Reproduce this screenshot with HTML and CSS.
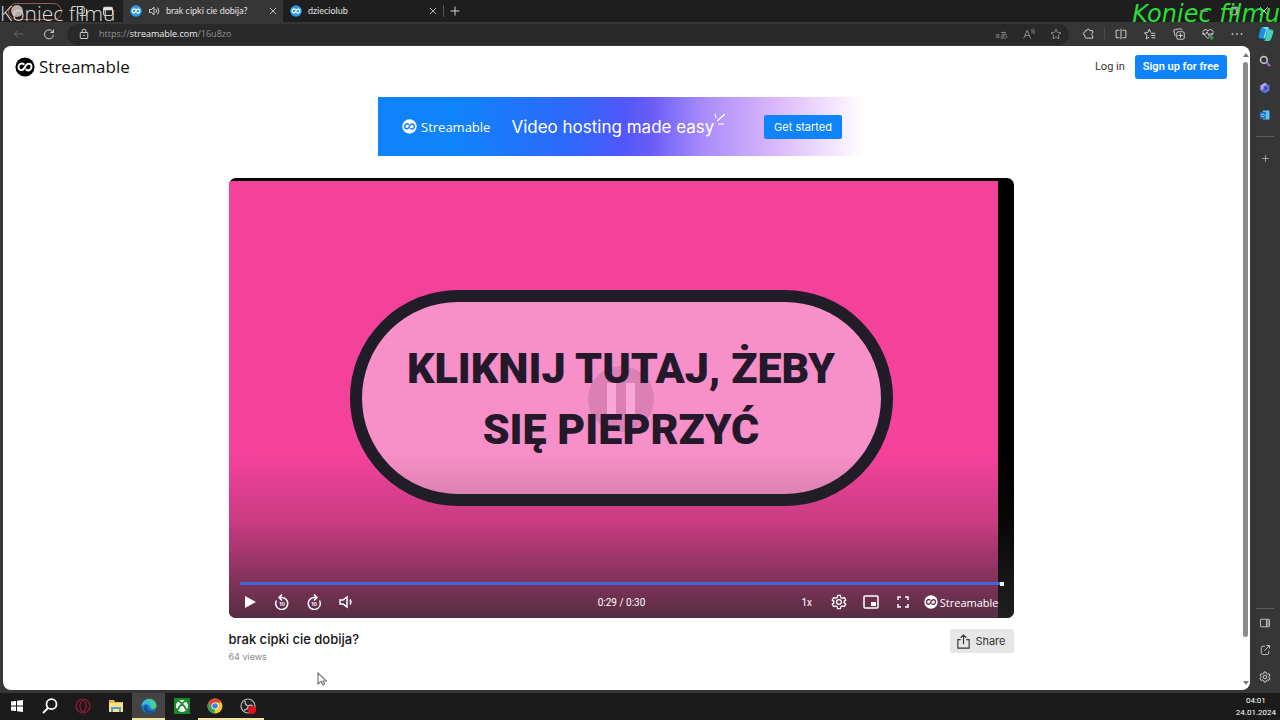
FILE: index.html
```html
<!DOCTYPE html>
<html lang="pl">

<head>
    <meta charset="utf-8">
    <title>brak cipki cie dobija?</title>
    <meta name="viewport" content="width=device-width,initial-scale=1" />
    <link rel="stylesheet" href="styles.css">
</head>

<body>
    <svg class="defs" aria-hidden="true">
        <symbol id="logo" viewBox="0 0 24 24">
            <circle class="logo-disc" cx="12" cy="12" r="11.5" />
            <path class="logo-line" d="M10.500 8.600C7.500 6.400 4 9 4.200 12.600c.300 3.600 4.600 4.200 6.500 1.300l2.600-4c1.900-2.900 6.200-2.300 6.500 1.300.200 3.600-3.300 6.200-6.300 4" />
        </symbol>
        <symbol id="close" viewBox="0 0 16 16">
            <path d="M3 3l10 10M13 3L3 13" />
        </symbol>
        <symbol id="plus" viewBox="0 0 16 16">
            <path d="M8 2v12M2 8h12" />
        </symbol>
        <symbol id="gear" viewBox="0 0 24 24">
            <circle cx="12" cy="12" r="3.6" />
            <path d="M10 2h4l.7 3.2 2.3 1.3 3.1-1 2 3.5-2.4 2.1v2.1l2.4 2.1-2 3.5-3.1-1-2.3 1.3L14 22h-4l-.7-2.9L7 17.800l-3.100 1-2-3.500 2.400-2.100v-2.100L1.900 9l2-3.500 3.100 1 2.300-1.300z" />
        </symbol>
    </svg>

    <div class="titlebar">
        <div class="titlebar-left">
            <button class="profile" aria-label="Profile"><span class="avatar"></span></button>
            <button class="icon-btn" aria-label="Workspaces">
                <svg viewBox="0 0 16 16"><rect x="2" y="2" width="9" height="9" rx="2" /><path d="M5 14h7a2 2 0 0 0 2-2V5M5 6h3" /></svg>
            </button>
            <button class="icon-btn" aria-label="Tab actions">
                <svg viewBox="0 0 16 16"><rect x="2" y="3" width="12" height="11" rx="2" /><path class="solid" d="M2 3h12v4H2z" /></svg>
            </button>
            <span class="caption caption-left">Koniec filmu</span>
        </div>
        <div class="tab tab-active">
            <svg class="favicon"><use href="#logo" /></svg>
            <svg class="sound" viewBox="0 0 16 16"><path d="M2 6h2.500L8 3v10L4.500 10H2zM10.500 5.500q1.700 2.500 0 5M13 3.500q3 4.500 0 9" /></svg>
            <span class="tab-title">brak cipki cie dobija?</span>
            <button class="tab-close" aria-label="Close tab"><svg><use href="#close" /></svg></button>
        </div>
        <div class="tab">
            <svg class="favicon"><use href="#logo" /></svg>
            <span class="tab-title">dzieciolub</span>
            <button class="tab-close" aria-label="Close tab"><svg><use href="#close" /></svg></button>
        </div>
        <button class="new-tab" aria-label="New tab"><svg><use href="#plus" /></svg></button>
        <div class="window-buttons">
            <button aria-label="Minimize"><svg viewBox="0 0 16 16"><path d="M3 8h10" /></svg></button>
            <button aria-label="Restore"><svg viewBox="0 0 16 16"><path d="M3 5h8v8H3zM5 5V3h8v8h-2" /></svg></button>
            <button aria-label="Close"><svg><use href="#close" /></svg></button>
            <span class="caption caption-right">Koniec filmu</span>
        </div>
    </div>

    <div class="toolbar">
        <button class="tool back" aria-label="Back"><svg viewBox="0 0 16 16"><path d="M14 8H2M7 3L2 8l5 5" /></svg></button>
        <button class="tool" aria-label="Refresh"><svg viewBox="0 0 16 16"><path d="M13.500 6A6 6 0 1 0 14 9M14 2v4h-4" /></svg></button>
        <div class="address">
            <svg viewBox="0 0 16 16"><rect x="3" y="6" width="10" height="8" rx="1" /><path d="M5.500 6V4a2.500 2.500 0 0 1 5 0v2" /><circle class="solid" cx="8" cy="10" r="1" /></svg>
            <span class="url">https://<b>streamable.com</b>/16u8zo</span>
            <button class="tool dim translate" aria-label="Translate">aあ</button>
            <button class="tool dim" aria-label="Read aloud"><svg viewBox="0 0 16 16"><path d="M1 14L5.500 3 10 14M2.500 10h6M11 2q2 2 1 5M13 1q3 3 1.500 7" /></svg></button>
            <button class="tool dim" aria-label="Add to favorites"><svg viewBox="0 0 16 16"><path d="M8 1.500l2 4.300 4.700.6-3.500 3.200.9 4.700L8 12l-4.100 2.300.9-4.700L1.300 6.400 6 5.800z" /></svg></button>
        </div>
        <div class="tools">
            <button class="tool" aria-label="Extensions"><svg viewBox="0 0 16 16"><path d="M5 3.500a2 2 0 0 1 4 0h4v3a2.200 2.200 0 0 0 0 4v3H4.500a2 2 0 0 1-2-2v-2a2 2 0 0 1 0-4 2 2 0 0 1 2.500-2z" /></svg></button>
            <span class="tool-divider"></span>
            <button class="tool" aria-label="Split screen"><svg viewBox="0 0 16 16"><path d="M6 3H1.500v10H6M10 3h4.500v10H10M8 1v14" /></svg></button>
            <button class="tool" aria-label="Favorites"><svg viewBox="0 0 16 16"><path d="M9 6L7 1.500 5 6l-4.500.6L4 9.700 3 14.500l4-2.300M9.500 7H15M9.500 10H15M10 13h5" /></svg></button>
            <button class="tool" aria-label="Collections"><svg viewBox="0 0 16 16"><rect x="5" y="5" width="10" height="10" rx="2" /><path d="M10 7v6M7 10h6M3 11L1 4q0-2 2-2l7-1q2 0 2 2" /></svg></button>
            <button class="tool" aria-label="Browser essentials"><svg viewBox="0 0 16 16"><path d="M8 14L2 8C-1 3 5 0 8 4c3-4 9-1 6 4zM0 8h5l2-3 2 5 1-2h5" /><circle class="green" cx="13" cy="13" r="2.500" /></svg></button>
            <button class="tool" aria-label="Settings and more"><svg viewBox="0 0 16 16"><path class="solid" d="M1 7h2v2H1zM7 7h2v2H7zM13 7h2v2h-2z" /></svg></button>
            <button class="tool copilot" aria-label="Copilot">
                <svg viewBox="0 0 18 18">
                    <path fill="#1b8fe6" d="M5 1h6l-3 13H3q-3 0-2-4l2-7q1-2 2-2z" />
                    <path fill="#42d3b5" d="M10 4h5q3 0 2 4l-2 6q-1 3-4 3H6q2 0 3-5z" />
                    <path fill="#7be4f2" d="M5 1h6q1 0 2 3h-3L8 14H6L9 4z" />
                </svg>
            </button>
        </div>
    </div>

    <div class="middle">
        <div class="viewport">
            <div class="page">
                <header class="site-header">
                    <a class="brand" href="#"><svg><use href="#logo" /></svg>Streamable</a>
                    <nav>
                        <a class="login" href="#">Log in</a>
                        <a class="signup" href="#">Sign up for free</a>
                    </nav>
                </header>

                <a class="banner" href="#">
                    <span class="banner-brand"><svg><use href="#logo" /></svg>Streamable</span>
                    <span class="banner-text">Video hosting made easy</span>
                    <svg class="sparks" viewBox="0 0 12 14"><path d="M1 2l1 4M3 9l8-7M4 12h6" /></svg>
                    <span class="banner-cta">Get started</span>
                </a>

                <main class="video">
                    <div class="player">
                        <div class="frame"></div>
                        <button class="promo">
                            <span class="pause"></span>
                            <span class="promo-text">KLIKNIJ TUTAJ, ŻEBY<br>SIĘ PIEPRZYĆ</span>
                        </button>
                        <div class="shade"></div>
                        <div class="controls">
                            <input class="seek" type="range" min="0" max="300" value="300" aria-label="Seek">
                            <div class="control-row">
                                <div class="group">
                                    <button aria-label="Play"><svg viewBox="0 0 16 16"><path class="solid" d="M3 2l11 6-11 6z" /></svg></button>
                                    <button aria-label="Back 10 seconds"><svg viewBox="0 0 16 16"><path d="M2.500 6.500A6 6 0 1 0 8 3.500H5M8 .500l-3 3 3 3" /><text x="8" y="12">10</text></svg></button>
                                    <button aria-label="Forward 10 seconds"><svg viewBox="0 0 16 16"><path d="M13.500 6.500A6 6 0 1 1 8 3.500h3M8 .500l3 3-3 3" /><text x="8" y="12">10</text></svg></button>
                                    <button aria-label="Volume"><svg viewBox="0 0 16 16"><path d="M2 6h3l4-3v10l-4-3H2zM12 5.500q1.700 2.500 0 5" /></svg></button>
                                </div>
                                <span class="time">0:29 / 0:30</span>
                                <div class="group group-right">
                                    <button aria-label="Playback speed">1x</button>
                                    <button aria-label="Settings"><svg class="thick"><use href="#gear" /></svg></button>
                                    <button aria-label="Picture in picture"><svg viewBox="0 0 16 16"><rect x="1" y="2" width="14" height="12" rx="1" /><path class="solid" d="M8 8h5v4H8z" /></svg></button>
                                    <button aria-label="Full screen"><svg viewBox="0 0 16 16"><path d="M3 6V3h3M10 3h3v3M13 10v3h-3M6 13H3v-3" /></svg></button>
                                    <a class="player-brand" href="#"><svg><use href="#logo" /></svg>Streamable</a>
                                </div>
                            </div>
                        </div>
                    </div>
                    <div class="details">
                        <div>
                            <h1>brak cipki cie dobija?</h1>
                            <p class="views">64 views</p>
                        </div>
                        <button class="share">
                            <svg viewBox="0 0 16 16"><path d="M5 6H2v9h12V6h-3M8 11V1M5 4l3-3 3 3" /></svg>
                            Share
                        </button>
                    </div>
                </main>

                <svg class="cursor" viewBox="0 0 10 14"><path d="M1 1v11l3-2.500L6 13l1.500-1-1.500-3h3.500z" /></svg>
            </div>
            <div class="scrollbar">
                <span class="arrow arrow-up"></span>
                <span class="thumb"></span>
                <span class="arrow arrow-down"></span>
            </div>
        </div>

        <aside class="sidebar">
            <button aria-label="Search"><svg viewBox="0 0 16 16"><circle cx="6.500" cy="6.500" r="4.500" stroke-width="2" /><path stroke="#a56bd0" stroke-width="2.500" d="M10 10l5 5" /></svg></button>
            <button aria-label="Microsoft 365"><svg viewBox="0 0 16 16"><path class="plain" fill="#5b6fe0" d="M8 1l6 3.500v7L8 15l-6-3.500v-7z" /><path class="plain" fill="#b9a0f0" d="M8 1L2 4.500V11l4-2V6l5-3z" /><path class="plain" fill="#2b3b8c" d="M7 6l4 2-3 3z" /></svg></button>
            <button aria-label="Outlook"><svg viewBox="0 0 16 16"><path class="plain" fill="#5cc2f2" d="M5 2h9v12H5z" /><path class="plain" fill="#0f6fc0" d="M1 4h8v9H1z" /><circle cx="5" cy="8.500" r="2" /></svg></button>
            <hr>
            <button aria-label="Add"><svg class="small"><use href="#plus" /></svg></button>
            <hr class="push">
            <button aria-label="Toggle sidebar"><svg viewBox="0 0 16 16"><rect x="2" y="3" width="12" height="10" rx="1" /><path d="M10 3v10M12 4v8" /></svg></button>
            <button aria-label="Open externally"><svg viewBox="0 0 16 16"><path d="M8 3H5a2 2 0 0 0-2 2v7a2 2 0 0 0 2 2h6a2 2 0 0 0 2-2V9M7 9l7-7M10 2h4v4" /></svg></button>
            <button aria-label="Sidebar settings"><svg class="thick"><use href="#gear" /></svg></button>
        </aside>
    </div>

    <div class="taskbar">
        <button aria-label="Start"><svg viewBox="0 0 16 16"><path fill="#fff" d="M2 3.500L7 3v4.500H2zM8 2.800L14 2v5.500H8zM2 8.500h5V13l-5-.6zM8 8.500h6V14l-6-.8z" /></svg></button>
        <button aria-label="Search"><svg viewBox="0 0 16 16"><path fill="none" stroke="#fff" stroke-width="1.800" d="M6 10l-5 5M14.500 6.200a5 5 0 1 1-10 0 5 5 0 0 1 10 0z" /></svg></button>
        <button aria-label="Opera GX"><svg viewBox="0 0 16 16"><g fill="none" stroke="#a01538" stroke-width="1.200"><circle cx="8" cy="8" r="7" /><ellipse cx="8" cy="8" rx="3" ry="5.500" /></g></svg></button>
        <button aria-label="File Explorer"><svg viewBox="0 0 16 16"><path fill="#e9b93c" d="M1 2h5l1 2h8v10H1z" /><path fill="#ffe08a" d="M1 5h14v9H1z" /><path fill="#4d9fc4" d="M3 9h10v5h-2v-3H5v3H3z" /></svg></button>
        <button class="running current" aria-label="Microsoft Edge"><svg viewBox="0 0 16 16"><circle cx="8" cy="8" r="7.500" fill="#1c78c8" /><path fill="#4bd08b" d="M1 6C4-1 15-1 15.500 8c0 3-4 3.500-6 2.500 2-3-1-5-4-5Q3 5.500.500 8z" /><path fill="#35b9df" d="M1 6c2-4 8-4 9-1 1 2 0 4-1 5 0-4-5-5-8.500-2z" /><path fill="#145096" d="M6 7c-1 4 2 7 7 6-3 3-9 3-10-2 0-2 1-4 3-4z" /></svg></button>
        <button aria-label="Xbox"><svg viewBox="0 0 16 16"><path fill="#178a2c" d="M0 0h16v16H0z" /><circle cx="8" cy="8" r="6" fill="#fff" /><path fill="none" stroke="#178a2c" stroke-width="1.800" d="M3 13Q5 8 8 6q3 2 5 7M4 3q3 1 4 3 1-2 4-3" /></svg></button>
        <button class="running" aria-label="Google Chrome"><svg viewBox="0 0 16 16"><circle cx="8" cy="8" r="7.500" fill="#f5c52f" /><path fill="#df4437" d="M1.500 4.300A7.500 7.500 0 0 1 14.500 4.500H8L5 9.500z" /><path fill="#2e9e52" d="M1.500 4.300L5 9.800l3 1.700-.800 4A7.500 7.500 0 0 1 1.500 4.300z" /><circle cx="8" cy="8" r="3.600" fill="#fff" /><circle cx="8" cy="8" r="2.800" fill="#3f7fe8" /></svg></button>
        <button class="running" aria-label="OBS Studio"><svg viewBox="0 0 16 16"><circle cx="8" cy="8" r="7" fill="#222" stroke="#bbb" /><path fill="none" stroke="#bbb" stroke-width="1.300" d="M5 3q0 4 3 5M8 8q4-2 5 1M8 8q0 4-4 4" /><circle cx="12" cy="12" r="4" fill="#e3101c" /></svg></button>
        <time class="clock">04:01<br>24.01.2024</time>
    </div>
</body>

</html>
```
FILE: styles.css
```css
* {
    box-sizing: border-box;
}

body {
    margin: 0;
    min-height: 100vh;
    display: flex;
    flex-direction: column;
    overflow: hidden;
    background: #363636;
    font-family: Inter, "Open Sans", sans-serif;
    color: #111;
}

button {
    display: flex;
    align-items: center;
    justify-content: center;
    flex: none;
    padding: 0;
    border: 0;
    background: none;
    color: inherit;
    font: inherit;
}

a {
    color: inherit;
    text-decoration: none;
}

svg {
    display: block;
    flex: none;
    width: 12px;
    height: 12px;
    fill: none;
    stroke: currentColor;
    stroke-width: 1.2;
}

.defs {
    position: absolute;
    width: 0;
    height: 0;
}

.solid {
    fill: currentColor;
    stroke: none;
}

.plain {
    stroke: none;
}

.logo-disc {
    fill: var(--disc);
    stroke: none;
}

.logo-line {
    fill: none;
    stroke: var(--line);
    stroke-width: 2.4;
    stroke-linecap: round;
}

/* tabs */
.titlebar {
    display: flex;
    height: 22px;
    background: #1e1e1e;
    color: #e4e4e4;
    font: 9px/22px Lato, sans-serif;
}

.titlebar-left {
    position: relative;
    display: flex;
    align-items: center;
    gap: 14px;
    width: 123px;
    padding-left: 8px;
}

.profile {
    justify-content: flex-start;
    width: 54px;
    height: 17px;
    padding: 2px;
    border: 1px solid #9a5a4e;
    border-radius: 9px;
}

.avatar {
    width: 12px;
    height: 12px;
    border-radius: 50%;
    background: #b9aaa6;
}

.caption {
    position: absolute;
    top: 0;
    white-space: nowrap;
}

.caption-left {
    left: 0;
    font: 300 21px/26px "Open Sans", sans-serif;
    color: #ddd;
}

.caption-right {
    right: 0;
    font: italic 24px/28px "DejaVu Sans", sans-serif;
    color: #2bdc38;
}

.tab {
    display: flex;
    align-items: center;
    gap: 6px;
    width: 160px;
    padding: 0 5px 0 7px;
}

.tab-active {
    background: #363636;
}

.favicon {
    --disc: #2f9be0;
    --line: #fff;
}

.tab-title {
    flex: 1;
    white-space: nowrap;
}

.tab-close svg {
    width: 10px;
    height: 10px;
}

.new-tab {
    width: 22px;
    height: 12px;
    margin-top: 5px;
    border-left: 1px solid #555;
}

.window-buttons {
    position: relative;
    display: flex;
    align-items: center;
    gap: 18px;
    margin-left: auto;
    padding-right: 10px;
}

/* toolbar */
.toolbar {
    display: flex;
    align-items: center;
    height: 24px;
    background: #363636;
    color: #ddd;
}

.tool {
    width: 29px;
    height: 22px;
}

.back {
    width: 34px;
    padding-left: 3px;
    color: #6b6b6b;
}

.address {
    display: flex;
    align-items: center;
    flex: 1;
    height: 21px;
    margin-left: 4px;
    padding-left: 11px;
    border-radius: 11px;
    background: #292929;
}

.url {
    flex: 1;
    margin-left: 9px;
    color: #929292;
    font: 9px/20px "Open Sans", sans-serif;
}

.url b {
    color: #eee;
    font-weight: 400;
}

.address .tool {
    width: 27px;
}

.dim {
    color: #929292;
}

.translate {
    font: 8px "Open Sans", "Noto Sans CJK JP", sans-serif;
}

.tools {
    display: flex;
    align-items: center;
    padding-left: 5px;
}

.tool-divider {
    width: 1px;
    height: 12px;
    margin: 0 1px;
    background: #4c4c4c;
}

.green {
    fill: #2f9442;
    stroke: none;
}

.copilot svg {
    width: 16px;
    height: 16px;
    stroke: none;
}

/* page */
.middle {
    display: flex;
    flex: 1;
    padding: 0 0 3px 3px;
}

.viewport {
    display: flex;
    flex: 1;
    border-radius: 8px;
    background: #fff;
}

.page {
    position: relative;
    flex: 1;
}

.site-header {
    display: flex;
    align-items: center;
    justify-content: space-between;
    height: 41px;
    padding: 0 12px 0 12px;
}

.site-header nav {
    display: flex;
    align-items: center;
    gap: 10px;
    font-family: Roboto, sans-serif;
    font-size: 11px;
}

.brand,
.banner-brand,
.player-brand {
    display: flex;
    align-items: center;
    gap: 4px;
    font-family: "Open Sans", sans-serif;
    font-weight: 500;
}

.brand {
    --disc: #000;
    --line: #fff;
    font-size: 17px;
    line-height: 20px;
}

.brand svg {
    width: 20px;
    height: 20px;
}

.login {
    color: #333;
}

.signup {
    padding: 0 8px;
    border-radius: 3px;
    background: #0f84fa;
    color: #fff;
    font-weight: 600;
    line-height: 24px;
}

.banner {
    display: flex;
    align-items: center;
    width: 486px;
    height: 59px;
    margin: 10px auto 22px;
    padding: 0 22px 0 24px;
    background: linear-gradient(90deg, #0f84fa 15%, #2f68fa 40%, #4f58f8 50%, #685cf6 56%, #a98cfa 67%, #dcb8fb 82%, #f1e2fd 93%, #fff);
    color: #fff;
}

.banner-brand {
    --disc: #fff;
    --line: #1a7cfa;
    font-size: 13px;
}

.banner-brand svg {
    width: 15px;
    height: 15px;
}

.banner-text {
    margin-left: 21px;
    font-size: 17px;
    white-space: nowrap;
}

.sparks {
    width: 12px;
    height: 14px;
    margin-bottom: 16px;
}

.banner-cta {
    margin-left: auto;
    padding: 0 10px;
    border-radius: 2px;
    background: #0f84fa;
    font-size: 11px;
    line-height: 24px;
}

.video {
    width: 785px;
    margin: 0 auto;
}

.player {
    position: relative;
    display: grid;
    place-items: center;
    height: 440px;
    border-radius: 7px;
    overflow: hidden;
    background: #000;
}

.frame,
.shade {
    position: absolute;
    inset: 3px 16px 0 0;
    background: #f4429b;
}

.shade {
    inset: auto 0 0;
    height: 164px;
    background: linear-gradient(transparent, rgba(35, 35, 35, 0.2) 40%, rgba(40, 40, 40, 0.78));
}

.promo {
    position: relative;
    width: 543px;
    height: 216px;
    padding-top: 2px;
    border: 12px solid #211d28;
    border-radius: 108px;
    background: #f78fc8;
    color: #24192b;
    font: 900 43px/61px Roboto, sans-serif;
}

.promo-text {
    position: relative;
}

/* two light bars over a faint disc */
.pause {
    position: absolute;
    width: 66px;
    height: 66px;
    border-radius: 50%;
    background:
        linear-gradient(90deg, transparent 19px, #faa6d8 19px 28px, transparent 28px 38px, #faa6d8 38px 47px, transparent 47px) 0 17px / 66px 32px no-repeat,
        #dc7fb4;
}

.controls {
    position: absolute;
    inset: auto 10px 4px 11px;
    color: #fff;
    font: 10px Roboto, sans-serif;
}

.seek {
    display: block;
    width: 100%;
    height: 3px;
    margin: 0 0 5px;
    appearance: none;
    background: #3d68d8;
}

.seek::-webkit-slider-thumb {
    appearance: none;
    width: 4px;
    height: 4px;
    background: #eee;
}

.control-row {
    display: grid;
    grid-template-columns: 1fr auto 1fr;
    align-items: center;
    height: 24px;
}

.group {
    display: flex;
    align-items: center;
}

.group button {
    width: 32px;
    height: 24px;
}

.group > button:first-child {
    width: 20px;
    margin-right: 6px;
}

.group svg {
    width: 16px;
    height: 16px;
    stroke-width: 1.5;
}

.group text {
    fill: currentColor;
    stroke: none;
    font: bold 5px Inter, sans-serif;
    text-anchor: middle;
}

.group .thick {
    stroke-width: 2;
}

.group-right {
    justify-content: flex-end;
    padding-right: 5px;
}

.player-brand {
    --disc: #fff;
    --line: #6a3450;
    gap: 2px;
    margin-left: 5px;
    font-size: 11px;
}

.group .player-brand svg {
    width: 14px;
    height: 14px;
}

.details {
    display: flex;
    align-items: flex-start;
    justify-content: space-between;
    padding-top: 11px;
}

h1 {
    margin: 0;
    font-size: 13px;
    line-height: 20px;
    font-weight: 500;
}

.views {
    margin: 0;
    color: #888;
    font-size: 9px;
    line-height: 15px;
}

.share {
    gap: 4px;
    height: 24px;
    padding: 0 8px 0 6px;
    border-radius: 2px;
    background: #e6e6e6;
    color: #333;
    font-size: 11px;
}

.share svg {
    width: 15px;
    height: 15px;
}

.cursor {
    position: absolute;
    left: 314px;
    top: 626px;
    width: 10px;
    height: 14px;
    stroke: #777;
    fill: #fff;
}

.scrollbar {
    display: flex;
    flex-direction: column;
    align-items: center;
    width: 11px;
    padding: 7px 0 5px 2px;
}

.arrow {
    border: 3px solid transparent;
}

.arrow-up {
    border-top: 0;
    border-bottom: 4px solid #777;
}

.arrow-down {
    margin-top: auto;
    border-bottom: 0;
    border-top: 4px solid #777;
}

.thumb {
    width: 5px;
    height: 91%;
    margin-top: 5px;
    border-radius: 3px;
    background: #8b8b8b;
}

/* right rail */
.sidebar {
    display: flex;
    flex-direction: column;
    align-items: center;
    width: 30px;
    padding-top: 1px;
    color: #ccc;
}

.sidebar button {
    width: 30px;
    height: 27px;
}

.sidebar hr {
    width: 18px;
    margin: 8px 0;
    border: 0;
    border-top: 1px solid #5c5c5c;
}

.sidebar .push {
    margin: auto 0 0;
}

.sidebar .small {
    width: 9px;
    height: 9px;
}

.sidebar .thick {
    stroke-width: 2;
}

/* taskbar */
.taskbar {
    display: flex;
    height: 27px;
    background: #1b1b1b;
    color: #fff;
}

.taskbar button {
    width: 33px;
    border-bottom: 2px solid transparent;
}

.taskbar svg {
    width: 16px;
    height: 16px;
    stroke: none;
}

.taskbar .running {
    border-color: #f0e6a0;
}

.taskbar .current {
    background: #444;
}

.clock {
    margin-left: auto;
    padding: 2px 4px 0 0;
    font: 8px/12px Roboto, sans-serif;
    text-align: center;
}
```
